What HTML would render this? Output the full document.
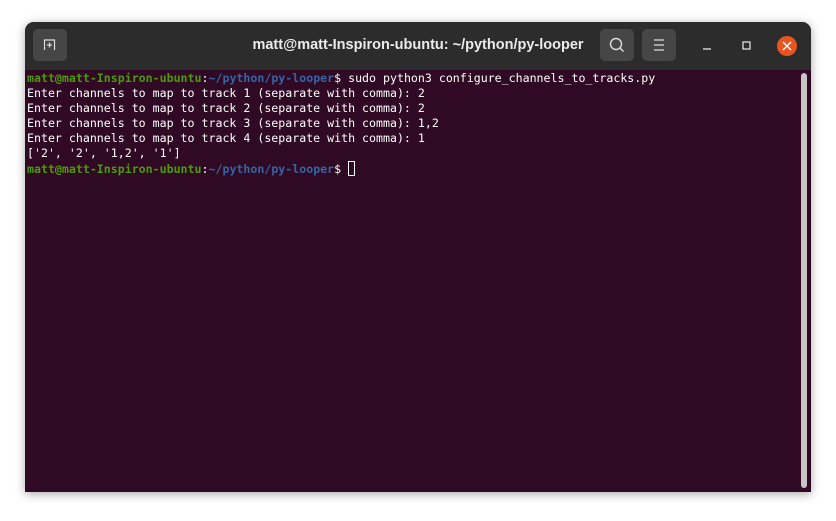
<!DOCTYPE html>
<html><head><style>
body{margin:0;width:836px;height:521px;background:#fff;position:relative;overflow:hidden;font-family:"Liberation Sans",sans-serif}
.win{position:absolute;left:25px;top:22px;width:786px;height:470px;border-radius:9px 9px 0 0;overflow:hidden;box-shadow:0 2px 10px rgba(0,0,0,.35);background:#300a24}
.tb{position:absolute;left:0;top:0;width:786px;height:48px;background:#2c2c2c}
.btn{position:absolute;top:7px;width:34px;height:32px;background:#464646;border-radius:5px}
.title{position:absolute;left:0;width:786px;top:15px;text-align:center;color:#ececec;font-weight:bold;font-size:14.5px}
.term{position:absolute;left:2px;top:49px;font-family:"DejaVu Sans Mono",monospace;font-size:11.6px;line-height:15px;color:#fff;white-space:pre}
.g{color:#4e9a06;font-weight:bold}.b{color:#3465a4;font-weight:bold}
.cur{display:inline-block;width:7px;height:15px;border:1px solid #fff;box-sizing:border-box;vertical-align:-3px}
.sb{position:absolute;left:776px;top:51px;width:6px;height:415px;background:#c8c4c6;border-radius:3px}
</style></head><body>
<div class="win">
<div class="tb">
<div class="btn" style="left:8px"><svg width="34" height="32"><path d="M11.5 21V11h10v10M16.5 13.5v5M14 16h5" stroke="#ddd" stroke-width="1.2" fill="none"/></svg></div>
<div class="title">matt@matt-Inspiron-ubuntu: ~/python/py-looper</div>
<div class="btn" style="left:575px"><svg width="34" height="32"><circle cx="16" cy="15" r="5.5" stroke="#ddd" stroke-width="1.4" fill="none"/><path d="M20 19l3.5 3.5" stroke="#ddd" stroke-width="1.5"/></svg></div>
<div class="btn" style="left:617px"><svg width="34" height="32"><path d="M12 11h10M12 16h10M12 21h10" stroke="#ddd" stroke-width="1.2"/></svg></div>
<svg style="position:absolute;left:670px;top:12px" width="110" height="24"><path d="M8 15h8" stroke="#eee" stroke-width="1.3"/><rect x="48" y="8" width="7" height="7" stroke="#eee" stroke-width="1.2" fill="none"/><circle cx="92" cy="12" r="10" fill="#e95420"/><path d="M88 8l8 8M96 8l-8 8" stroke="#fff" stroke-width="1.5"/></svg>
</div>
<div class="term"><span class="g">matt@matt-Inspiron-ubuntu</span>:<span class="b">~/python/py-looper</span>$ sudo python3 configure_channels_to_tracks.py
Enter channels to map to track 1 (separate with comma): 2
Enter channels to map to track 2 (separate with comma): 2
Enter channels to map to track 3 (separate with comma): 1,2
Enter channels to map to track 4 (separate with comma): 1
['2', '2', '1,2', '1']
<span class="g">matt@matt-Inspiron-ubuntu</span>:<span class="b">~/python/py-looper</span>$ <span class="cur"></span></div>
<div class="sb"></div>
</div>
</body></html>
